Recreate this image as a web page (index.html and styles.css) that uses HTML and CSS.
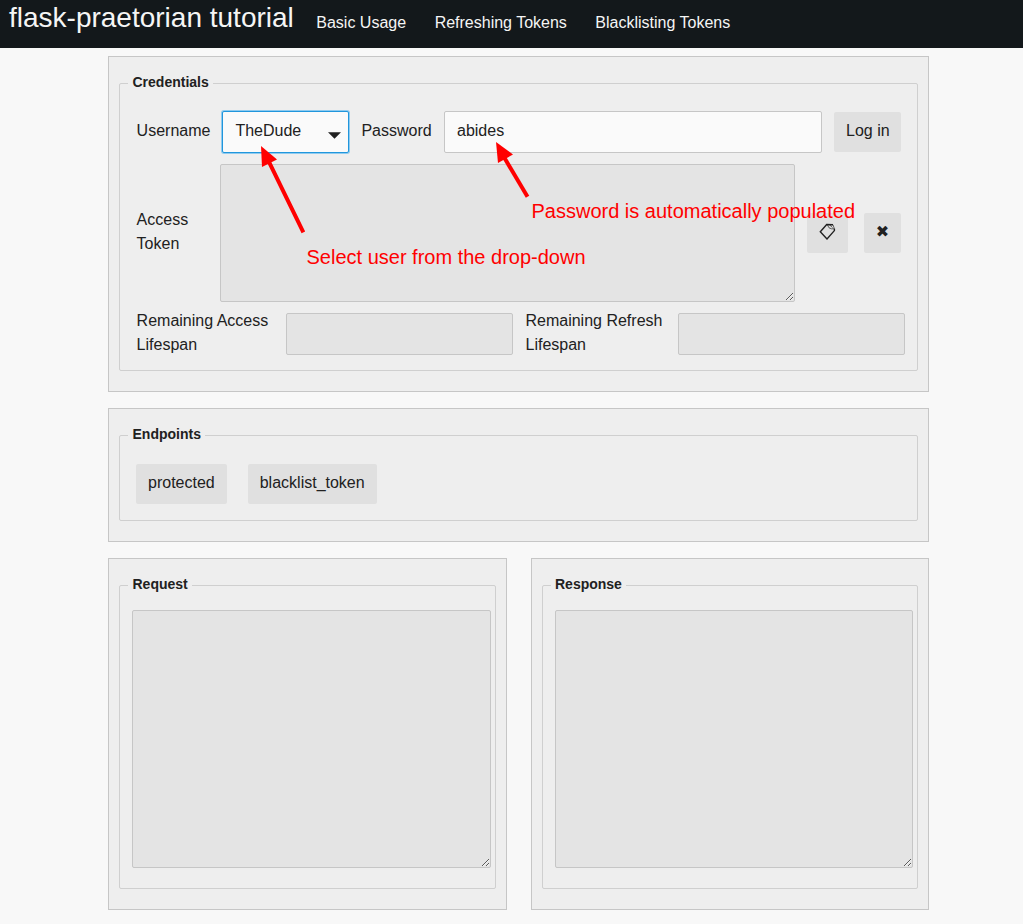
FILE: index.html
```html
<!DOCTYPE html>
<html lang="en">
<head>
<meta charset="utf-8">
<title>flask-praetorian tutorial</title>
<link rel="stylesheet" href="styles.css">
</head>
<body>
<header class="topbar">
  <a class="logo">flask-praetorian tutorial</a>
  <nav class="nav"><a>Basic Usage</a><a>Refreshing Tokens</a><a>Blacklisting Tokens</a></nav>
</header>
<main class="page">
  <section class="card">
    <fieldset class="credentials">
      <legend>Credentials</legend>
      <div class="row row-login">
        <label class="label">Username</label>
        <div class="select"><span>TheDude</span><svg class="caret" width="13" height="7" viewBox="0 0 13 7"><path d="M0 0.2H13L6.5 6.8Z" fill="#212121"/></svg></div>
        <label class="label">Password</label>
        <input class="field" type="text" value="abides">
        <button class="btn">Log in</button>
      </div>
      <div class="row row-token">
        <label class="label">Access Token</label>
        <textarea class="field readonly" readonly></textarea>
        <button class="btn" aria-label="Copy"><svg class="tag" width="17" height="17" viewBox="0 0 17 17" fill="none" stroke="#212121"><path d="M14 1.800L7.700 1.500L1.300 8.800L8 16L15.400 7.600V5.800" stroke-width="1.400"/><path d="M8.500 2L10 4.800L12.500 5.800L15.400 5.800L14 1.800M10.500 1.800L13.500 4.500" stroke-width=".7"/></svg></button>
        <button class="btn cross">✖</button>
      </div>
      <div class="row row-life">
        <label class="label">Remaining Access Lifespan</label>
        <input class="field readonly" type="text" readonly>
        <label class="label">Remaining Refresh Lifespan</label>
        <input class="field readonly" type="text" readonly>
      </div>
    </fieldset>
  </section>
  <section class="card">
    <fieldset class="endpoints">
      <legend>Endpoints</legend>
      <div class="actions"><button class="btn">protected</button><button class="btn">blacklist_token</button></div>
    </fieldset>
  </section>
  <div class="split">
    <section class="card">
      <fieldset class="message"><legend>Request</legend><textarea class="field readonly" readonly></textarea></fieldset>
    </section>
    <section class="card">
      <fieldset class="message response"><legend>Response</legend><textarea class="field readonly" readonly></textarea></fieldset>
    </section>
  </div>
</main>
<svg class="arrows" width="1023" height="300" viewBox="0 0 1023 300">
  <g stroke="#f00" stroke-width="4" fill="#f00">
    <path d="M268.500 161L302.500 230.500" stroke-linecap="square"/><path d="M261 146L277 159.500L262 167Z" stroke="none"/>
    <path d="M504.500 158L526.500 195" stroke-linecap="square"/><path d="M496 142L513 154.500L498 163Z" stroke="none"/>
  </g>
</svg>
<div class="note note-user">Select user from the drop-down</div>
<div class="note note-password">Password is automatically populated</div>
</body>
</html>
```
FILE: styles.css
```css
* { box-sizing: border-box; }
body {
  margin: 0;
  height: 924px;
  overflow: hidden;
  position: relative;
  background: #f8f8f8;
  color: #212121;
  font: 16px/24px "Liberation Sans", Arial, sans-serif;
}
.topbar {
  display: flex;
  height: 48px;
  background: #13181b;
  color: #f5f5f5;
  padding-left: 9px;
}
.logo { font-size: 28px; line-height: 36px; width: 307.300px; white-space: nowrap; }
.nav { display: flex; gap: 28.500px; padding-top: 11px; white-space: nowrap; }
.page { width: 821px; margin: 8px 0 0 108px; display: flex; flex-direction: column; gap: 16px; }
.card { background: #eee; border: 1px solid #c6c6c6; padding: 16px 10px 20px; }
fieldset {
  margin: 0;
  min-width: 0;
  border: 1px solid #cfcfcf;
  border-radius: 2px;
}
legend { font-size: 14px; font-weight: bold; line-height: 21px; height: 21px; padding: 0 4px 0 4.500px; position: relative; top: -1px; }
.credentials { height: 298px; padding: 17px 12px 0 8px; }
.endpoints { height: 96px; padding: 18px 8px 0; }
.message { height: 314px; padding: 14px 4px 0 8px; }
.response legend { padding-left: 4px; }
.message .field { height: 258px; margin-left: 4px; width: calc(100% - 4px); }
.row { display: grid; padding-left: 8.600px; margin-bottom: 11px; }
.row-login { grid-template-columns: 84.400px 140px 83px 378px 79px; align-items: start; }
.row-login .label { padding-top: 8px; }
.row-login .select + .label { padding-left: .4px; }
.row-login .btn { margin: 1px 0 0 12px; }
.row-token { grid-template-columns: 83.400px 575px 53px 53px; align-items: center; height: 138px; }
.row-token .btn { margin-left: 12px; }
.row-token .cross { margin-left: 16px; font-family: "DejaVu Sans", sans-serif; padding: 0 0 2px; }
.row-token .label { padding: 0 20px 2px 0; }
.row-life { grid-template-columns: 149.400px 227px 165px 227px; align-items: start; height: 42px; margin: 0; }
.row-life .label { margin-top: -4px; }
.row-life .label + .field + .label { padding-left: 12.500px; }
.field {
  display: block;
  width: 100%;
  height: 42px;
  margin: 0;
  padding: 0 12px 2px;
  border: 1px solid #c6c6c6;
  border-radius: 2px;
  background: #fafafa;
  color: #212121;
  font: inherit;
  outline: none;
}
.readonly { background: #e4e4e4; }
textarea.field { height: 138px; }
.select {
  width: 127px;
  height: 42px;
  display: flex;
  align-items: center;
  justify-content: space-between;
  padding: 0 7px 2px 12.400px;
  margin-left: 1px;
  background: #fafafa;
  border: 1px solid #2196dc;
  border-radius: 2px;
  box-shadow: 0 0 0 1px #8fcbef;
}
.caret { position: relative; top: 4px; }
.btn {
  height: 40px;
  border: 0;
  border-radius: 2px;
  padding: 0 12px 2px;
  background: #e0e0e0;
  color: #212121;
  font: inherit;
  white-space: nowrap;
}
.tag { display: block; margin-bottom: 2px; }
.actions { display: flex; gap: 21px; padding-left: 8px; }
.split { display: grid; grid-template-columns: 399px 398px; gap: 24px; }
.arrows { position: absolute; left: 0; top: 0; pointer-events: none; }
.note { position: absolute; color: #f00; font-size: 20px; line-height: 24px; white-space: nowrap; }
.note-user { left: 306.500px; top: 245px; }
.note-password { left: 531.500px; top: 199px; }
```
